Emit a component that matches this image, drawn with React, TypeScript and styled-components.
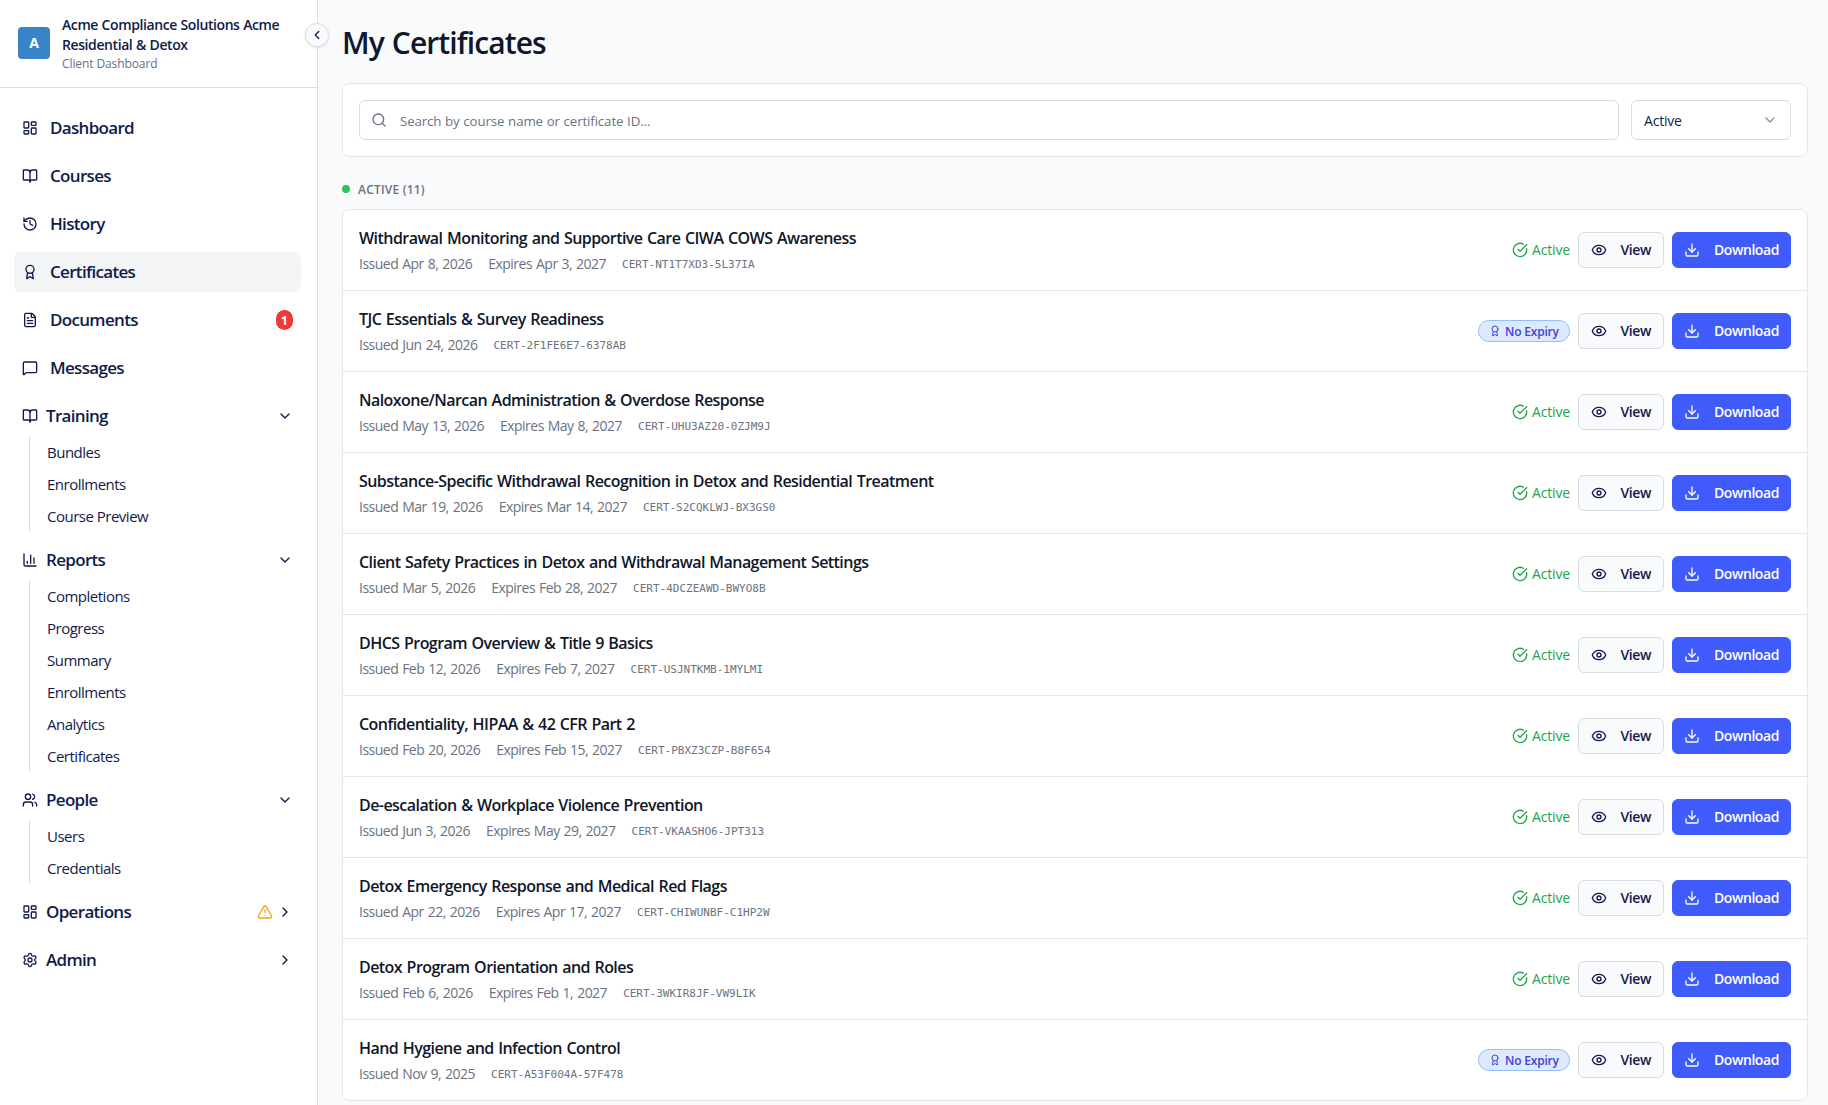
import React from 'react';
import styled, { createGlobalStyle, css } from 'styled-components';
import {
  Award, BookOpen, ChartColumn, ChevronDown, ChevronLeft, ChevronRight, CircleCheckBig, Download, Eye,
  FileText, History, LayoutDashboard, MessageSquare, Search, Settings, TriangleAlert, Users,
} from 'lucide-react';

const color = {
  navy: '#101b4b',
  ink: '#0f172a',
  muted: '#6b7280',
  line: '#e5e7eb',
  field: '#d8dce4',
  page: '#f9fafc',
  primary: '#3f5bfb',
  green: '#22a447',
};

const GlobalStyle = createGlobalStyle`
  *, *::before, *::after { box-sizing: border-box; }
  body {
    margin: 0;
    background: ${color.page};
    color: ${color.navy};
    font-family: "Open Sans", "Noto Sans", sans-serif;
    font-size: 14px;
    overflow: hidden;
  }
  button, input { font: inherit; letter-spacing: inherit; color: inherit; }
  svg { display: block; flex: none; }
`;

const Shell = styled.div`
  display: grid;
  grid-template-columns: 318px minmax(0, 1fr);
  height: 1105px;
  overflow: hidden;
`;

const Sidebar = styled.aside`
  position: relative;
  background: #fff;
  border-right: 1px solid #d9dce3;
`;

const Brand = styled.header`
  display: flex;
  align-items: center;
  gap: 12px;
  height: 88px;
  padding: 0 18px 2px;
  border-bottom: 1px solid #d9dce3;
`;

const Logo = styled.div`
  display: grid;
  place-items: center;
  flex: none;
  width: 32px;
  height: 32px;
  border-radius: 4px;
  background: #3884c7;
  color: #fff;
  font-size: 14px;
  font-weight: 700;
`;

const BrandText = styled.div`
  padding-top: 2px;
`;

const BrandName = styled.div`
  font-size: 14px;
  line-height: 20px;
  font-weight: 600;
  letter-spacing: -0.41px;
  word-spacing: 0.4px;
  white-space: nowrap;
`;

const BrandSub = styled.div`
  margin-top: 1px;
  font-size: 12px;
  line-height: 16px;
  letter-spacing: -0.1px;
  color: #64708a;
`;

const Collapse = styled.button`
  position: absolute;
  top: 23px;
  right: -12px;
  z-index: 1;
  display: grid;
  place-items: center;
  width: 24px;
  height: 24px;
  padding: 0;
  border: 1px solid #d9dce3;
  border-radius: 50%;
  background: ${color.page};
  box-shadow: 0 1px 3px rgba(0, 0, 0, 0.1);
`;

const Nav = styled.nav`
  display: flex;
  flex-direction: column;
  gap: 8px;
  padding: 20px 16px 0 14px;
`;

const NavItem = styled.a<{ $active?: boolean; $group?: boolean }>`
  display: flex;
  align-items: center;
  gap: ${(p) => (p.$group ? 8 : 12)}px;
  height: 40px;
  padding: 0 8px;
  border-radius: 6px;
  background: ${(p) => (p.$active ? '#f3f4f6' : 'transparent')};
  font-size: 17px;
  font-weight: 600;
  letter-spacing: -0.68px;
`;

const NavLabel = styled.span`
  padding-bottom: 2px;
`;

const NavEnd = styled.span`
  display: flex;
  gap: 4px;
  margin-left: auto;
`;

const Count = styled.span`
  display: grid;
  place-items: center;
  width: 17px;
  height: 20px;
  margin-left: auto;
  border-radius: 9px;
  background: #ef3838;
  color: #fff;
  font-size: 12px;
  font-weight: 700;
  letter-spacing: 0;
`;

const SubList = styled.div`
  margin-left: 15px;
  padding-left: 17px;
  border-left: 1px solid #d9dce3;
`;

const SubItem = styled.a`
  display: flex;
  align-items: center;
  height: 32px;
  font-size: 15px;
  letter-spacing: -0.5px;
`;

const Main = styled.main`
  padding: 23px 20px 0 24px;
`;

const PageTitle = styled.h1`
  margin: 0;
  font-size: 30px;
  line-height: 40px;
  font-weight: 600;
  letter-spacing: -0.9px;
  word-spacing: 1px;
  color: ${color.ink};
`;

const cardBox = css`
  background: #fff;
  border: 1px solid ${color.line};
  border-radius: 8px;
`;

const Filters = styled.section`
  ${cardBox}
  display: flex;
  gap: 12px;
  margin-top: 20px;
  padding: 16px;
`;

const fieldBox = css`
  display: flex;
  align-items: center;
  height: 40px;
  padding: 0 12px;
  border: 1px solid ${color.field};
  border-radius: 6px;
  background: #fff;
`;

const SearchField = styled.label`
  ${fieldBox}
  flex: 1;
  gap: 13px;
  padding: 0 11px;
  color: ${color.muted};
`;

const SearchInput = styled.input`
  flex: 1;
  padding: 2px 0 0;
  border: 0;
  outline: 0;
  background: transparent;
  font-size: 13.333px;
  letter-spacing: -0.14px;
  word-spacing: 0.4px;
  &::placeholder { color: ${color.muted}; opacity: 1; }
`;

const StatusSelect = styled.button`
  ${fieldBox}
  justify-content: space-between;
  width: 160px;
  font-size: 14px;
  letter-spacing: -0.2px;
  svg { color: #8a91a5; }
`;

const SectionLabel = styled.h2`
  display: flex;
  align-items: center;
  gap: 8px;
  height: 16px;
  margin: 24px 0 12px;
  font-size: 12px;
  font-weight: 600;
  letter-spacing: 0.2px;
  color: ${color.muted};
  text-transform: uppercase;
`;

const Dot = styled.span`
  width: 8px;
  height: 8px;
  border-radius: 50%;
  background: #2bc653;
`;

const List = styled.section`
  ${cardBox}
`;

const Row = styled.article`
  display: flex;
  align-items: center;
  justify-content: space-between;
  height: 81px;
  padding: 0 16px;
  border-bottom: 1px solid ${color.line};
  &:last-child { height: 80px; border-bottom: 0; }
`;

const RowTitle = styled.h3`
  margin: 0 0 4px;
  font-size: 16px;
  line-height: 24px;
  font-weight: 600;
  letter-spacing: -0.55px;
  word-spacing: 0.9px;
  color: ${color.ink};
`;

const Meta = styled.div`
  display: flex;
  align-items: center;
  gap: 16px;
  line-height: 20px;
  letter-spacing: -0.51px;
  word-spacing: 0.8px;
  color: ${color.muted};
`;

const CertId = styled.code`
  height: 20px;
  font-family: "DejaVu Sans Mono", monospace;
  font-size: 11px;
  line-height: 22px;
  letter-spacing: 0;
`;

const Actions = styled.div`
  display: flex;
  align-items: center;
  gap: 8px;
`;

const ActiveMark = styled.span`
  display: flex;
  align-items: center;
  gap: 4px;
  color: ${color.green};
  letter-spacing: -0.15px;
`;

const NoExpiry = styled.span`
  display: flex;
  align-items: center;
  gap: 4px;
  width: 92px;
  height: 22px;
  padding: 0 10px;
  border: 1px solid #93c1fd;
  border-radius: 11px;
  background: #dce9fe;
  color: #4540d6;
  font-size: 12px;
  font-weight: 600;
  letter-spacing: -0.2px;
  white-space: nowrap;
`;

const Button = styled.button<{ $primary?: boolean }>`
  display: flex;
  align-items: center;
  justify-content: space-between;
  width: ${(p) => (p.$primary ? 119 : 86)}px;
  height: 36px;
  padding: 0 ${(p) => (p.$primary ? 11 : 12)}px;
  border: 1px solid ${(p) => (p.$primary ? color.primary : color.field)};
  border-radius: 6px;
  background: ${(p) => (p.$primary ? color.primary : color.page)};
  color: ${(p) => (p.$primary ? '#fff' : color.navy)};
  font-size: 14px;
  font-weight: 600;
  letter-spacing: -0.42px;
`;

const ActionLabel = styled.span`
  padding-bottom: 1px;
`;

const links = [
  { icon: LayoutDashboard, label: 'Dashboard' },
  { icon: BookOpen, label: 'Courses' },
  { icon: History, label: 'History' },
  { icon: Award, label: 'Certificates', active: true },
  { icon: FileText, label: 'Documents', count: 1 },
  { icon: MessageSquare, label: 'Messages' },
];

const groups = [
  { icon: BookOpen, label: 'Training', items: ['Bundles', 'Enrollments', 'Course Preview'] },
  { icon: ChartColumn, label: 'Reports', items: ['Completions', 'Progress', 'Summary', 'Enrollments', 'Analytics', 'Certificates'] },
  { icon: Users, label: 'People', items: ['Users', 'Credentials'] },
  { icon: LayoutDashboard, label: 'Operations', items: [], warn: true },
  { icon: Settings, label: 'Admin', items: [] },
];

const certificates: { title: string; issued: string; expires?: string; id: string }[] = [
  { title: 'Withdrawal Monitoring and Supportive Care CIWA COWS Awareness', issued: 'Apr 8, 2026', expires: 'Apr 3, 2027', id: 'CERT-NT1T7XD3-5L37IA' },
  { title: 'TJC Essentials & Survey Readiness', issued: 'Jun 24, 2026', id: 'CERT-2F1FE6E7-6378AB' },
  { title: 'Naloxone/Narcan Administration & Overdose Response', issued: 'May 13, 2026', expires: 'May 8, 2027', id: 'CERT-UHU3AZ20-0ZJM9J' },
  { title: 'Substance-Specific Withdrawal Recognition in Detox and Residential Treatment', issued: 'Mar 19, 2026', expires: 'Mar 14, 2027', id: 'CERT-S2CQKLWJ-BX3GS0' },
  { title: 'Client Safety Practices in Detox and Withdrawal Management Settings', issued: 'Mar 5, 2026', expires: 'Feb 28, 2027', id: 'CERT-4DCZEAWD-BWYO8B' },
  { title: 'DHCS Program Overview & Title 9 Basics', issued: 'Feb 12, 2026', expires: 'Feb 7, 2027', id: 'CERT-USJNTKMB-1MYLMI' },
  { title: 'Confidentiality, HIPAA & 42 CFR Part 2', issued: 'Feb 20, 2026', expires: 'Feb 15, 2027', id: 'CERT-PBXZ3CZP-B8F654' },
  { title: 'De-escalation & Workplace Violence Prevention', issued: 'Jun 3, 2026', expires: 'May 29, 2027', id: 'CERT-VKAASHO6-JPT313' },
  { title: 'Detox Emergency Response and Medical Red Flags', issued: 'Apr 22, 2026', expires: 'Apr 17, 2027', id: 'CERT-CHIWUNBF-C1HP2W' },
  { title: 'Detox Program Orientation and Roles', issued: 'Feb 6, 2026', expires: 'Feb 1, 2027', id: 'CERT-3WKIR8JF-VW9LIK' },
  { title: 'Hand Hygiene and Infection Control', issued: 'Nov 9, 2025', id: 'CERT-A53F004A-57F478' },
];

export default function App() {
  return (
    <Shell>
      <GlobalStyle />
      <Sidebar>
        <Brand>
          <Logo>A</Logo>
          <BrandText>
            <BrandName>Acme Compliance Solutions Acme<br />Residential &amp; Detox</BrandName>
            <BrandSub>Client Dashboard</BrandSub>
          </BrandText>
        </Brand>
        <Collapse aria-label="Collapse sidebar"><ChevronLeft size={14} strokeWidth={2.4} /></Collapse>
        <Nav>
          {links.map(({ icon: Icon, label, active, count }) => (
            <NavItem key={label} $active={active}>
              <Icon size={16} />
              <NavLabel>{label}</NavLabel>
              {count && <Count>{count}</Count>}
            </NavItem>
          ))}
          {groups.map(({ icon: Icon, label, items, warn }) => (
            <div key={label}>
              <NavItem $group>
                <Icon size={16} />
                <NavLabel>{label}</NavLabel>
                <NavEnd>
                  {warn && <TriangleAlert size={16} color="#f5a114" />}
                  {items.length > 0 ? <ChevronDown size={16} /> : <ChevronRight size={16} />}
                </NavEnd>
              </NavItem>
              {items.length > 0 && (
                <SubList>
                  {items.map((item) => <SubItem key={item}>{item}</SubItem>)}
                </SubList>
              )}
            </div>
          ))}
        </Nav>
      </Sidebar>
      <Main>
        <PageTitle>My Certificates</PageTitle>
        <Filters>
          <SearchField>
            <Search size={16} />
            <SearchInput placeholder="Search by course name or certificate ID..." />
          </SearchField>
          <StatusSelect>Active<ChevronDown size={16} /></StatusSelect>
        </Filters>
        <SectionLabel><Dot />Active (11)</SectionLabel>
        <List>
          {certificates.map((cert) => (
            <Row key={cert.id}>
              <div>
                <RowTitle>{cert.title}</RowTitle>
                <Meta>
                  <span>Issued {cert.issued}</span>
                  {cert.expires && <span>Expires {cert.expires}</span>}
                  <CertId>{cert.id}</CertId>
                </Meta>
              </div>
              <Actions>
                {cert.expires
                  ? <ActiveMark><CircleCheckBig size={16} /><ActionLabel>Active</ActionLabel></ActiveMark>
                  : <NoExpiry><Award size={12} />No Expiry</NoExpiry>}
                <Button><Eye size={16} /><ActionLabel>View</ActionLabel></Button>
                <Button $primary><Download size={16} /><ActionLabel>Download</ActionLabel></Button>
              </Actions>
            </Row>
          ))}
        </List>
      </Main>
    </Shell>
  );
}
